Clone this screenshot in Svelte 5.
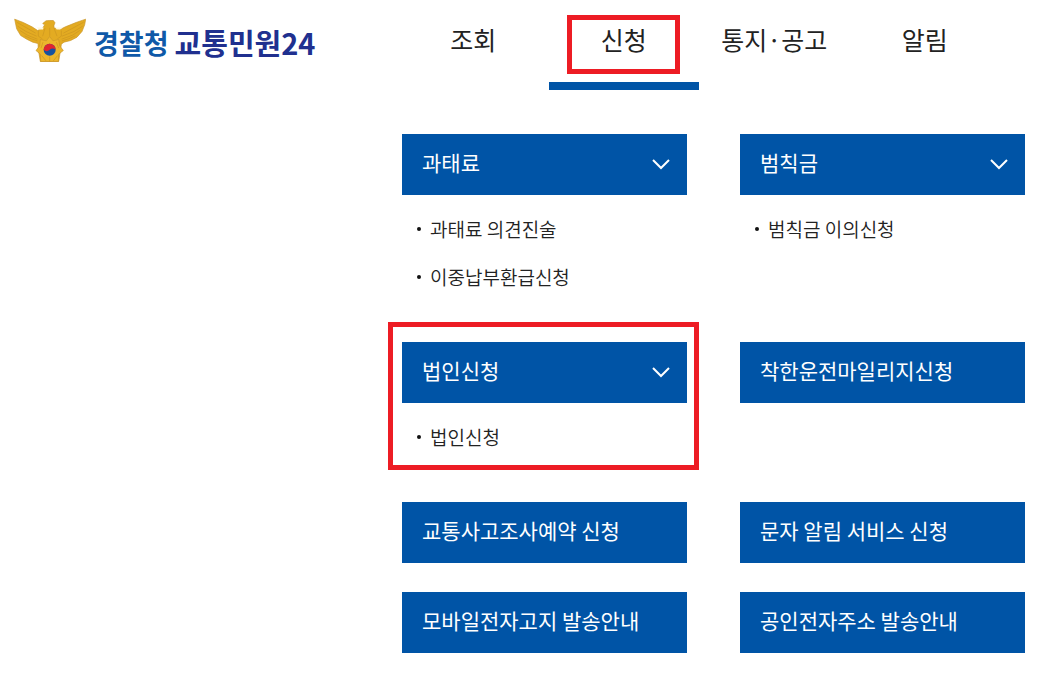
<script lang="ts">
  const menus = ['조회', '신청', '통지·공고', '알림'];
  let active = $state('신청');

  const groups = [
    { title: '과태료', items: ['과태료 의견진술', '이중납부환급신청'] },
    { title: '범칙금', items: ['범칙금 이의신청'] },
    { title: '법인신청', items: ['법인신청'], marked: true },
    { title: '착한운전마일리지신청', items: [] },
    { title: '교통사고조사예약 신청', items: [] },
    { title: '문자 알림 서비스 신청', items: [] },
    { title: '모바일전자고지 발송안내', items: [] },
    { title: '공인전자주소 발송안내', items: [] }
  ];
</script>

<header>
  <a href="/" class="logo">
    <svg viewBox="40 54 216 134" aria-hidden="true">
      <g stroke="#c8962a" stroke-width="2" stroke-linejoin="round">
        <path fill="#e3ab22" d="M42 57 L68 67 L94 80 L111 91 L126 84 L132 74 L126 70 L136 62 L146 61 L158 61 L163 68 L160 75 L160 83 L178 88 L194 80 L226 67 L255 57 L252 74 L244 94 L229 111 L210 121 L190 126 L182 132 L180 148 L174 184 L119 184 L113 148 L112 130 L96 126 L78 117 L60 106 L48 86 Z" />
        <path fill="#ecb62c" d="M147 109 L157 122 L174 118 L177 137 L188 151 L174 162 L173 184 L120 184 L119 162 L106 151 L117 137 L119 118 L137 122 Z" />
      </g>
      <g fill="none" stroke="#cc9520" stroke-width="2">
        <path d="M48 66 L76 82 L105 99 M51 78 L76 94 L108 108 M58 91 L80 105 L110 117 M72 107 L92 116 L110 122" />
        <path d="M249 66 L220 82 L188 99 M246 78 L220 94 L184 108 M237 91 L216 105 L183 117 M224 107 L204 116 L184 122" />
        <path d="M113 91 V108 L125 116 M182 91 V108 L170 116 M133 84 L126 108 M160 84 L169 108 M147 83 V107" />
        <path d="M127 126 L121 144 M167 126 L174 144 M123 166 L136 182 M171 166 L158 182 M147 169 V184" />
      </g>
      <path fill="#fff7df" d="M108 82 H129 L127 88 H116 Z M164 82 H187 L178 88 H168 Z" />
      <circle cx="147" cy="149" r="18" fill="#1552a0" />
      <path fill="#e0252f" d="M129 149 A18 18 0 0 1 165 149 A13 13 0 0 0 147 149 A13 13 0 0 1 129 149 Z" />
    </svg>
    <span class="police">경찰청</span>
    <span class="service">교통민원24</span>
  </a>
  <nav>
    {#each menus as menu}
      <button class:active={menu === active} onclick={() => (active = menu)}>
        <span>{menu}</span>
      </button>
    {/each}
  </nav>
</header>

<main>
  {#each groups as group}
    <section class:marked={group.marked}>
      <a href="/" class="title">
        <span>{group.title}</span>
        {#if group.items.length}
          <svg class="arrow" viewBox="0 0 18 12" aria-hidden="true">
            <path d="M1 1 L9 9 L17 1" />
          </svg>
        {/if}
      </a>
      {#if group.items.length}
        <ul>
          {#each group.items as item}
            <li><a href="/">{item}</a></li>
          {/each}
        </ul>
      {/if}
    </section>
  {/each}
</main>

<style>
  :global(body) {
    margin: 0;
    background: #fff;
    color: #222;
    font-family: 'Noto Sans CJK KR', sans-serif;
  }

  a {
    color: inherit;
    text-decoration: none;
  }

  header {
    display: flex;
    padding-right: 59px;
  }

  .logo {
    display: flex;
    align-items: center;
    flex: 0 0 384px;
    height: 60px;
    padding: 10px 0 0 14px;
    font-weight: 700;
    white-space: nowrap;
  }

  .logo svg {
    width: 72px;
    height: 45px;
    margin-right: 8px;
  }

  .logo span {
    padding-top: 4px;
  }

  .police {
    margin-right: 6px;
    color: #0f59a8;
    font-size: 27px;
  }

  .service {
    color: #20308f;
    font-size: 29px;
  }

  nav {
    display: grid;
    grid-template-columns: repeat(4, 1fr);
    flex: 1;
    height: 90px;
  }

  nav button {
    position: relative;
    padding: 0 0 4px;
    border: 0;
    border-bottom: 8px solid transparent;
    background: none;
    color: inherit;
    font: inherit;
    font-size: 25px;
    cursor: pointer;
  }

  nav .active {
    border-bottom-color: #0054a6;
  }

  nav .active::after {
    content: '';
    position: absolute;
    inset: 15px 19px 8px 18px;
    border: 5px solid #ed1c24;
  }

  main {
    display: grid;
    grid-template-columns: 1fr 1fr;
    gap: 29px 53px;
    margin: 44px 34px 24px 402px;
  }

  section {
    position: relative;
  }

  .title {
    display: flex;
    align-items: center;
    justify-content: space-between;
    height: 61px;
    padding: 0 17px 0 20px;
    background: #0054a6;
    color: #fff;
    font-size: 21px;
  }

  .title span {
    padding-bottom: 6px;
  }

  .arrow {
    width: 18px;
    height: 12px;
    fill: none;
    stroke: #fff;
    stroke-width: 2;
  }

  ul {
    margin: 0;
    padding: 10px 0 12px 15px;
    list-style: none;
  }

  li {
    display: flex;
    align-items: center;
    gap: 9px;
    height: 48px;
    font-size: 19px;
    font-weight: 350;
  }

  li a {
    padding-bottom: 2px;
  }

  li::before {
    content: '';
    width: 4px;
    height: 4px;
    border-radius: 50%;
    background: #111;
  }

  .marked::after {
    content: '';
    position: absolute;
    inset: -20px -12px 3px -14px;
    border: 5px solid #ed1c24;
    pointer-events: none;
  }
</style>
